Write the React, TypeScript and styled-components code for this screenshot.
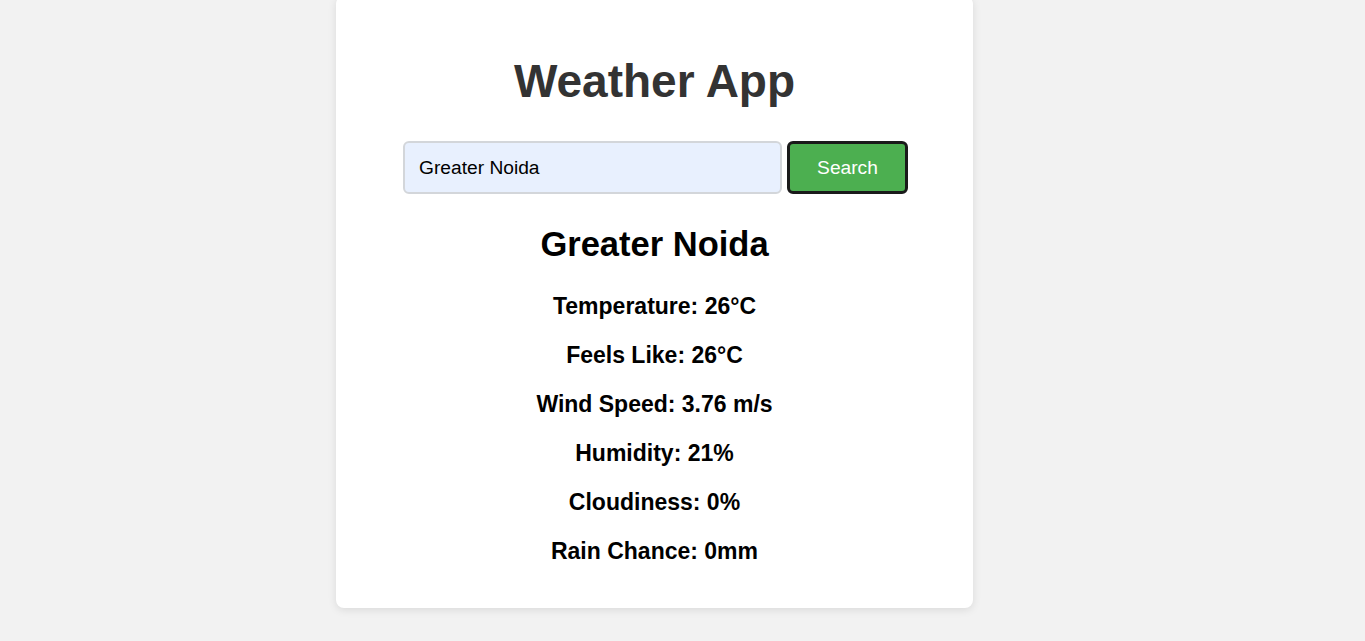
import styled, { createGlobalStyle } from 'styled-components';

const GlobalStyle = createGlobalStyle`
  html, body {
    margin: 0;
    padding: 0;
    background: #f2f2f2;
    font-family: 'Liberation Sans', Arial, sans-serif;
  }
`;

const Page = styled.div`
  display: flex;
  justify-content: center;
  padding-right: 56px;
  min-height: 641px;
  box-sizing: border-box;
`;

const Card = styled.div`
  width: 637px;
  margin-top: -4px;
  align-self: flex-start;
  background: #fff;
  border-radius: 8px;
  box-shadow: 0 2px 8px rgba(0, 0, 0, 0.1);
  padding: 62px 0 32px;
  box-sizing: border-box;
  text-align: center;
`;

const Title = styled.h1`
  margin: 0;
  font-size: 46px;
  line-height: 46px;
  font-weight: 700;
  color: #333;
`;

const SearchRow = styled.form`
  display: flex;
  justify-content: center;
  gap: 5px;
  margin: 37px 0 0 2px;
  height: 53px;
`;

const CityInput = styled.input`
  width: 379px;
  box-sizing: border-box;
  padding: 0 14px;
  font-family: inherit;
  font-size: 19.2px;
  color: #000;
  background: #e8f0fe;
  border: 2px solid #d3d6da;
  border-radius: 6px;
  outline: none;
`;

const SearchButton = styled.button`
  width: 121px;
  box-sizing: border-box;
  font-family: inherit;
  font-size: 19.2px;
  color: #fff;
  background: #4caf50;
  border: 3px solid #1a1a1a;
  border-radius: 6px;
  cursor: pointer;
`;

const City = styled.h2`
  margin: 30px 0 0;
  font-size: 34.5px;
  line-height: 40px;
  font-weight: 700;
  color: #000;
`;

const Details = styled.div`
  margin-top: 18px;
`;

const Detail = styled.p`
  margin: 0;
  font-size: 23px;
  line-height: 49px;
  font-weight: 700;
  color: #000;
`;

const details = [
  'Temperature: 26°C',
  'Feels Like: 26°C',
  'Wind Speed: 3.76 m/s',
  'Humidity: 21%',
  'Cloudiness: 0%',
  'Rain Chance: 0mm',
];

export default function App() {
  return (
    <>
      <GlobalStyle />
      <Page>
        <Card>
          <Title>Weather App</Title>
          <SearchRow onSubmit={(e) => e.preventDefault()}>
            <CityInput type="text" defaultValue="Greater Noida" />
            <SearchButton type="submit">Search</SearchButton>
          </SearchRow>
          <City>Greater Noida</City>
          <Details>
            {details.map((d) => (
              <Detail key={d}>{d}</Detail>
            ))}
          </Details>
        </Card>
      </Page>
    </>
  );
}
